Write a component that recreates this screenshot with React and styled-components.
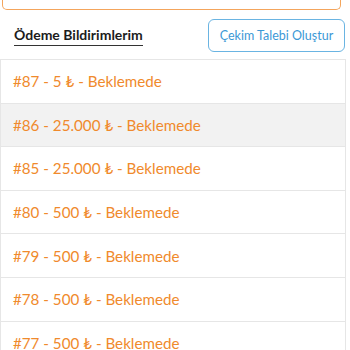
import React from 'react'
import styled, { createGlobalStyle } from 'styled-components'

const GlobalStyle = createGlobalStyle`
    body {
        margin: 0;
        background: #fff;
        font-family: Lato, "Noto Sans", sans-serif;
    }
`;

const Page = styled.div`
    width: 346px;
    display: flex;
    flex-direction: column;
`;

const TopBox = styled.div`
    height: 9px;
    margin: 0 5px 0 2px;
    border: 1.5px solid #f4a55c;
    border-top: none;
    border-radius: 0 0 5px 5px;
`;

const Header = styled.div`
    height: 49px;
    display: flex;
    align-items: center;
    justify-content: space-between;
    padding: 0 1px 0 14px;
`;

const Title = styled.h2`
    margin: 0;
    margin-top: 2px;
    font-size: 14px;
    font-weight: 700;
    color: #1c1c1c;
    border-bottom: 1.5px solid #333;
    padding-bottom: 1px;
    line-height: 18px;
`;

const ActionButton = styled.button`
    height: 33px;
    width: 137px;
    margin-top: 2px;
    background: #fff;
    border: 1px solid #6ab4e2;
    border-radius: 6px;
    color: #3b98d6;
    font-family: Lato, "Noto Sans", sans-serif;
    font-size: 12.5px;
    padding: 0;
`;

const List = styled.div`
    display: flex;
    flex-direction: column;
`;

const Row = styled.div`
    height: 42.6px;
    flex-shrink: 0;
    display: flex;
    align-items: center;
    padding-left: 12px;
    border: 1px solid #e6e6e6;
    border-top: ${p => (p.first ? '1px solid #e6e6e6' : 'none')};
    background: ${p => (p.active ? '#f2f2f2' : '#fff')};
    color: #f08a2c;
    font-size: 15.2px;
`;

const items = [
    { id: 87, amount: '5' },
    { id: 86, amount: '25.000' },
    { id: 85, amount: '25.000' },
    { id: 80, amount: '500' },
    { id: 79, amount: '500' },
    { id: 78, amount: '500' },
    { id: 77, amount: '500' },
]

const App = () => {
    return (
        <Page>
            <GlobalStyle />
            <TopBox />
            <Header>
                <Title>Ödeme Bildirimlerim</Title>
                <ActionButton>Çekim Talebi Oluştur</ActionButton>
            </Header>
            <List>
                {items.map((item, index) => (
                    <Row key={item.id} first={index === 0} active={index === 1}>
                        #{item.id} - {item.amount} ₺ - Beklemede
                    </Row>
                ))}
            </List>
        </Page>
    )
}

export default App
